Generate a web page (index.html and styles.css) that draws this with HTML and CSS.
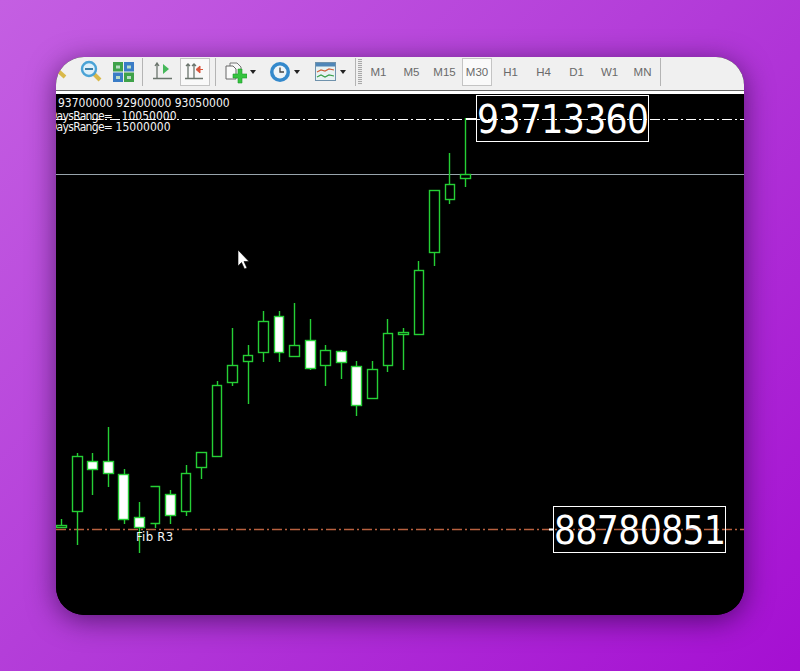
FILE: index.html
```html
<!DOCTYPE html>
<html lang="en">
<head>
<meta charset="utf-8">
<title>Chart</title>
<link rel="stylesheet" href="styles.css">
</head>
<body>
<main class="window">
  <header class="toolbar">
    <svg class="ico w-clip" viewBox="0 0 12 24"><path class="handle" d="M0 9l9 8"/></svg>
    <svg class="ico w-zoom" viewBox="0 0 22 24">
      <path class="handle" d="M14 14l6 6"/>
      <circle cx="9" cy="9" r="7" fill="#dff0fa" stroke="#4aa3d6" stroke-width="2.4"/>
      <path d="M5 9h8" stroke="#3a7fa8" stroke-width="2"/>
    </svg>
    <svg class="ico w-tile" viewBox="0 0 21 20">
      <rect x="0" y="0" width="10" height="9.5" fill="#3fa24a"/><rect x="11" y="0" width="10" height="9.5" fill="#3a7cc6"/>
      <rect x="0" y="10.500" width="10" height="9.500" fill="#3a7cc6"/><rect x="11" y="10.500" width="10" height="9.500" fill="#3fa24a"/>
      <path d="M3 3.500h4v3H3zM14 3.500h4v3h-4zM3 14h4v3H3zM14 14h4v3h-4z" fill="#b9dcc6"/>
    </svg>
    <span class="sep"></span>
    <svg class="ico w-axis" viewBox="0 0 20 20">
      <path class="axis" d="M4 1v16M0 16.500h19M2 4l2-3 2 3"/>
      <path d="M10 2l6 5-6 5z" fill="#45b85a"/>
    </svg>
    <span class="toggle">
      <svg class="ico w-axis2" viewBox="0 0 20 20">
        <path class="axis" d="M3 2v15M9 2v15M0 16.500h18M1 4l2-2 2 2M7 4l2-2 2 2"/>
        <path d="M18 7.500h-3M11 7.500l4-3.500v7z" fill="#d8553c" stroke="#d8553c"/>
      </svg>
    </span>
    <span class="sep"></span>
    <svg class="ico w-doc" viewBox="0 0 22 24">
      <path d="M5 3h7l4 4v9H5z" fill="#f5f5f5" stroke="#777"/>
      <path d="M1 6h7l3 3v10H1z" fill="#fafafa" stroke="#666"/>
      <path d="M13 9h4v5h5v4h-5v5h-4v-5H8v-4h5z" fill="#35c43f" stroke="#1f9a2c" stroke-width=".6"/>
    </svg>
    <span class="caret"></span>
    <svg class="ico w-clock" viewBox="0 0 22 22">
      <circle cx="11" cy="11" r="10" fill="#3489cc"/>
      <circle cx="11" cy="11" r="6.500" fill="#eef4f8"/>
      <path d="M11 6.500V11h4" fill="none" stroke="#444" stroke-width="1.300"/>
    </svg>
    <span class="caret"></span>
    <svg class="ico w-ind" viewBox="0 0 21 20">
      <rect x=".5" y=".5" width="20" height="18" fill="#e8f2f2" stroke="#6f92ac"/>
      <rect x="1" y="1" width="19" height="3.500" fill="#4f86b8"/>
      <path d="M2 10l4-2 4 1 4-2 5 1" fill="none" stroke="#d0603a" stroke-width="1.200"/>
      <path d="M2 15l4-2 4 2 4-2 5 1" fill="none" stroke="#3aa04a" stroke-width="1.200"/>
    </svg>
    <span class="caret caret-last"></span>
    <span class="sep sep-grip"></span>
    <span class="grip"></span>
    <nav class="periods">
      <span class="tf">M1</span><span class="tf">M5</span><span class="tf">M15</span>
      <span class="tf tf-on">M30</span><span class="tf">H1</span><span class="tf">H4</span>
      <span class="tf">D1</span><span class="tf">W1</span><span class="tf">MN</span>
    </nav>
    <span class="sep"></span>
  </header>
  <section class="chart">
    <svg class="plot" viewBox="56 94 688 521">
      <path class="line-gray" d="M56 174.500h688"/>
      <path class="line-white" d="M56 119.500h688"/>
      <path class="line-brown" d="M56 529.500h688"/>
      <path class="wick" d="M61.500 519v6M77.500 453v92M92.500 453v42M108.500 427v60M124.500 469v55M139.500 502v51M155.500 523v5M170.500 490v34M186.500 465v51M201.500 467v12M217.500 381v4M232.500 328v58M248.500 345v59M263.500 311v51M279.500 311v51M294.500 303v42M310.500 319v51M325.500 345v41M341.500 350v29M356.500 361v55M372.500 361v8M387.500 319v53M403.500 328v42M418.500 261v9M434.500 252v14M449.500 153v51M465.500 118v69"/>
      <g class="hollow">
        <rect x="56.500" y="525.500" width="10" height="2"/>
        <rect x="72.500" y="456.500" width="10" height="55"/>
        <path d="M150.500 486.500h9v37h-9"/>
        <rect x="181.500" y="473.500" width="9" height="38"/>
        <rect x="196.500" y="452.500" width="10" height="15"/>
        <rect x="212.500" y="385.500" width="9" height="71"/>
        <rect x="227.500" y="365.500" width="10" height="17"/>
        <rect x="243.500" y="355.500" width="9" height="6"/>
        <rect x="258.500" y="321.500" width="10" height="31"/>
        <rect x="289.500" y="345.500" width="10" height="11"/>
        <rect x="320.500" y="350.500" width="10" height="15"/>
        <rect x="367.500" y="369.500" width="10" height="29"/>
        <rect x="383.500" y="333.500" width="9" height="32"/>
        <rect x="398.500" y="332.500" width="10" height="2"/>
        <rect x="414.500" y="270.500" width="9" height="64"/>
        <rect x="429.500" y="190.500" width="10" height="62"/>
        <rect x="445.500" y="184.500" width="9" height="15"/>
        <rect x="460.500" y="174.500" width="10" height="4"/>
      </g>
      <g class="filled">
        <rect x="87.500" y="461.500" width="10" height="8"/>
        <rect x="103.500" y="461.500" width="10" height="12"/>
        <rect x="118.500" y="474.500" width="10" height="45"/>
        <rect x="134.500" y="517.500" width="10" height="10"/>
        <rect x="165.500" y="494.500" width="10" height="21"/>
        <rect x="274.500" y="316.500" width="9" height="36"/>
        <rect x="305.500" y="340.500" width="10" height="28"/>
        <rect x="336.500" y="351.500" width="10" height="11"/>
        <rect x="351.500" y="366.500" width="10" height="39"/>
      </g>
      <path class="stub" d="M466 119h10M549 529.500h4"/>
      <path class="cursor" d="M238 250v16l3.500-3.500 3 6.500 2.500-1-3-6.500h5z"/>
    </svg>
    <div class="info info-a">93700000 92900000 93050000</div>
    <div class="info info-b"><span class="tight">DaysRange=</span> 10050000</div>
    <div class="info info-c"><span class="tight">DaysRange=</span> 15000000</div>
    <div class="info info-fib">Fib R3</div>
    <div class="price price-hi">93713360</div>
    <div class="price price-lo">88780851</div>
  </section>
</main>
</body>
</html>
```
FILE: styles.css
```css
* { box-sizing: border-box; }
html, body { margin: 0; height: 100%; }
body {
  width: 800px;
  height: 671px;
  overflow: hidden;
  padding: 57px 56px;
  background: linear-gradient(135deg, #c45fe2 0%, #b23ad8 50%, #a50fd2 100%);
}
.window {
  display: flex;
  flex-direction: column;
  width: 688px;
  height: 558px;
  border-radius: 28px;
  overflow: hidden;
  background: #000;
  box-shadow: 0 5px 28px rgba(30, 0, 50, .6);
}
.toolbar {
  display: flex;
  align-items: center;
  flex: none;
  height: 37px;
  padding-bottom: 4px;
  background: #f0f0f0;
  border-bottom: 3px solid #fff;
  box-shadow: inset 0 -1px 0 #666;
  font: 11.500px "Liberation Sans", Arial, sans-serif;
  color: #6a6a6a;
}
.ico { display: block; flex: none; }
.w-clip { width: 12px; height: 24px; margin-right: 12px; }
.w-zoom { width: 22px; height: 24px; margin-right: 11px; }
.w-tile { width: 21px; height: 20px; margin-right: 8px; }
.w-axis { width: 20px; height: 20px; margin: 0 7px 0 10px; }
.w-axis2 { width: 20px; height: 20px; }
.w-doc { width: 22px; height: 24px; margin-left: 9px; }
.w-clock { width: 22px; height: 22px; margin-left: 13px; }
.w-ind { width: 21px; height: 20px; margin-left: 15px; }
.handle { fill: none; stroke: #d9b94a; stroke-width: 4; }
.axis { fill: none; stroke: #6a746c; stroke-width: 1.300; }
.sep { flex: none; width: 1px; height: 28px; background: #b4b4b4; }
.toggle {
  display: flex;
  align-items: center;
  justify-content: center;
  flex: none;
  width: 30px;
  height: 28px;
  margin-right: 5px;
  background: #f9f9f9;
  border: 1px solid #c4c4c4;
}
.caret {
  flex: none;
  width: 0;
  height: 0;
  margin-left: 3px;
  border: 3px solid transparent;
  border-top: 4px solid #222;
  border-bottom: 0;
}
.caret-last { margin-left: 4px; }
.sep-grip { margin-left: 9px; }
.grip {
  flex: none;
  width: 4px;
  height: 26px;
  margin-left: 2px;
  background: repeating-linear-gradient(#a8a8a8 0 1px, #ececec 1px 2px);
}
.periods { display: flex; align-items: center; margin-right: 1px; }
.tf {
  flex: none;
  width: 33px;
  height: 28px;
  line-height: 28px;
  text-align: center;
}
.tf-on { width: 30px; margin: 0 2px 0 1px; background: #fafafa; border: 1px solid #c4c4c4; line-height: 26px; }
.chart { position: relative; flex: 1; overflow: hidden; background: #000; }
.plot { position: absolute; left: 0; top: 0; width: 688px; height: 521px; display: block; }
.wick { fill: none; stroke: #25cf35; stroke-width: 1.400; }
.hollow { fill: #000; stroke: #25cf35; stroke-width: 1.400; }
.filled { fill: #fff; stroke: #25cf35; stroke-width: 1.400; }
.line-gray { stroke: #98a4ac; shape-rendering: crispEdges; }
.line-white { stroke: #fff; stroke-dasharray: 10 3 2 3; shape-rendering: crispEdges; }
.line-brown { stroke: #b8603f; stroke-width: 1.300; stroke-dasharray: 10 3 2 3; }
.stub { stroke: #fff; stroke-width: 2; }
.cursor { fill: #fff; stroke: #000; stroke-width: .6; }
.info {
  position: absolute;
  font: 12px/13px "DejaVu Sans", Verdana, sans-serif;
  font-stretch: condensed;
  white-space: nowrap;
  color: #f4f4f4;
}
.tight { letter-spacing: -.7px; }
.info-a { left: 2px; top: 3px; }
.info-b { left: -7px; top: 16px; word-spacing: 6px; }
.info-c { left: -7px; top: 27px; }
.info-fib { left: 80px; top: 436px; font-size: 13px; letter-spacing: .3px; }
.price {
  position: absolute;
  width: 173px;
  height: 47px;
  border: 1px solid #fff;
  font: 38.500px/47px "DejaVu Sans", Tahoma, sans-serif;
  font-stretch: condensed;
  letter-spacing: -.6px;
  text-align: center;
  white-space: nowrap;
  color: #fff;
}
.price-hi { left: 420px; top: 1px; }
.price-lo { left: 497px; top: 412px; }
```
